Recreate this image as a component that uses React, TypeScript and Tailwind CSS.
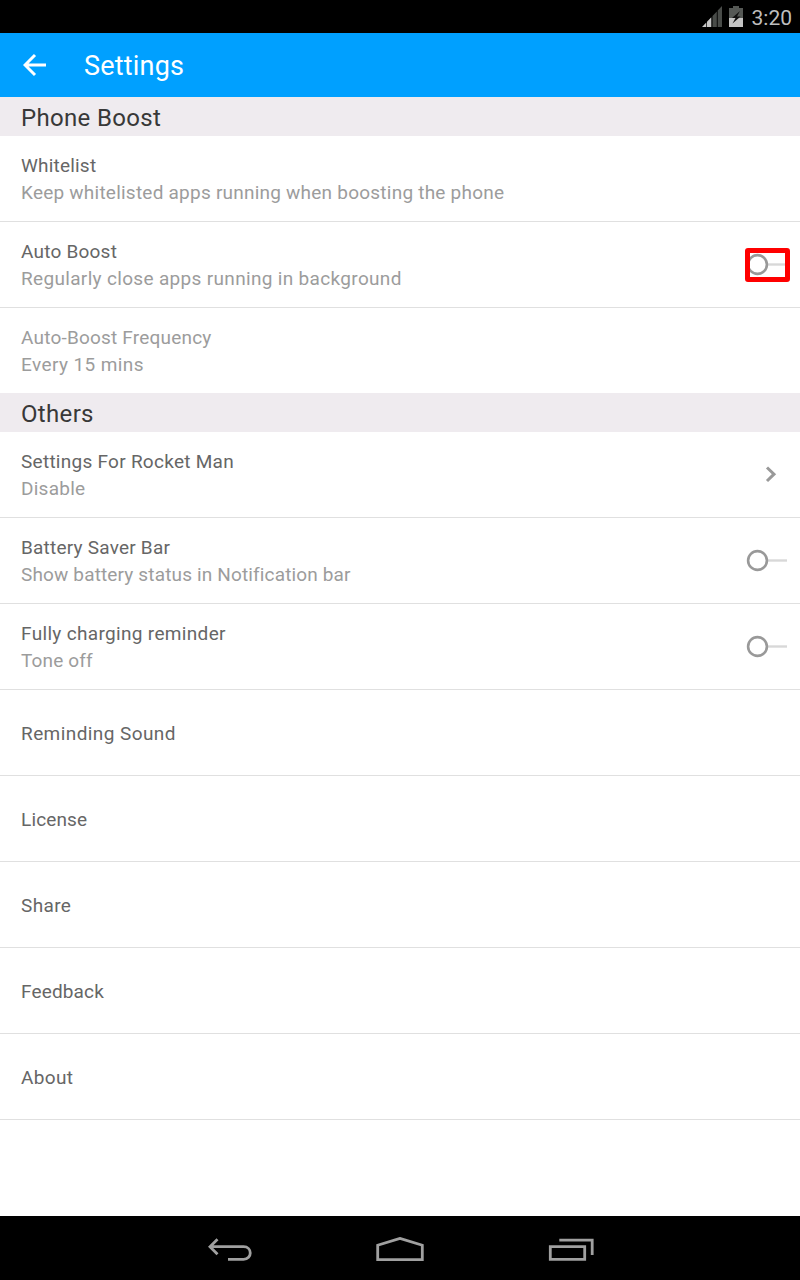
import React from "react";

type Item = {
  title: string;
  sub?: string;
  titleClass?: string;
  subClass?: string;
  kind?: "switch" | "chevron";
  marked?: boolean;
  off?: boolean;
  last?: boolean;
};

const boost: Item[] = [
  { title: "Whitelist", titleClass: "tracking-[0.2px]", sub: "Keep whitelisted apps running when boosting the phone", subClass: "tracking-[0.23px]" },
  { title: "Auto Boost", titleClass: "tracking-[0.22px]", sub: "Regularly close apps running in background", subClass: "tracking-[0.33px]", kind: "switch", marked: true },
  { title: "Auto-Boost Frequency", titleClass: "tracking-[0.2px]", sub: "Every 15 mins", subClass: "tracking-[0.4px]", off: true, last: true },
];
const others: Item[] = [
  { title: "Settings For Rocket Man", titleClass: "tracking-[0.27px]", sub: "Disable", subClass: "tracking-[0.25px]", kind: "chevron" },
  { title: "Battery Saver Bar", titleClass: "tracking-[0.22px]", sub: "Show battery status in Notification bar", subClass: "tracking-[0.15px]", kind: "switch" },
  { title: "Fully charging reminder", titleClass: "tracking-[0.33px]", sub: "Tone off", subClass: "tracking-[0.15px]", kind: "switch" },
  { title: "Reminding Sound", titleClass: "tracking-[0.42px]" },
  { title: "License", titleClass: "tracking-[0.15px]" },
  { title: "Share", titleClass: "tracking-[0.35px]" },
  { title: "Feedback", titleClass: "tracking-[0.15px]" },
  { title: "About", titleClass: "tracking-[0.35px]" },
];

function Switch() {
  return (
    <svg width="42" height="24" viewBox="0 0 42 24" fill="none">
      <path d="M21 11.5H41" stroke="#d8d8d8" strokeWidth="2.4" />
      <circle cx="11.5" cy="11.5" r="9.4" stroke="#999" strokeWidth="2.6" />
    </svg>
  );
}

function Header({ children }: { children: string }) {
  return (
    <h2 className="flex h-[39px] items-center bg-[#efebef] pl-[21px] pt-0.5 text-2xl leading-8 tracking-[0.33px] text-[#383838]">
      {children}
    </h2>
  );
}

function Row({ item }: { item: Item }) {
  return (
    <li className={`flex items-center justify-between pl-[21px] ${item.last ? "h-[85px]" : "h-[86px] border-b border-[#e0e0e0]"}`}>
      <div className={`text-[19px] leading-[27px] ${item.sub ? "" : "pt-0.5"}`}>
        <div className={`${item.off ? "text-[#9c9c9c]" : "text-[#666]"} ${item.titleClass ?? ""}`}>{item.title}</div>
        {item.sub && <div className={`text-[#9c9c9c] ${item.subClass ?? ""}`}>{item.sub}</div>}
      </div>
      {item.kind === "switch" && (
        <div className="relative mr-3 flex">
          <Switch />
          {item.marked && <div className="absolute -left-px -top-[5px] h-[34px] w-[45px] rounded-[3px] border-[5px] border-[#f00]" />}
        </div>
      )}
      {item.kind === "chevron" && (
        <svg className="mr-[22px]" width="14" height="18" viewBox="0 0 14 18" fill="none">
          <path d="M3 1.5L10 8.2L3 15" stroke="#999" strokeWidth="3" />
        </svg>
      )}
    </li>
  );
}

export default function App() {
  return (
    <div className="flex h-[1280px] w-[800px] flex-col bg-white font-[Roboto,sans-serif]">
      <div className="flex h-[33px] items-center justify-end bg-black pr-2 text-[#bebebe]">
        <svg className="mb-px mr-[7px]" width="20" height="21" viewBox="0 0 20 21">
          <path d="M0 21L4.3 16.5V21ZM5 15.8L9.3 11.3V21H5Z" fill="#c8c8c8" />
          <path d="M10.5 10L14.8 5.5V21H10.5ZM15.7 4.5L20 0V21H15.7Z" fill="#494c49" />
        </svg>
        <svg className="mb-px mr-[9px]" width="14" height="21" viewBox="0 0 14 21">
          <path d="M4 0H10V2H14V12H0V2H4Z" fill="#555855" />
          <path d="M0 12H14V21H0Z" fill="#c4c4c4" />
          <path d="M11 5L3 12H6.5L3.5 17.5L11.5 10.5H8Z" fill="#111" />
        </svg>
        <span className="pt-0.5 text-[21px] leading-7">3:20</span>
      </div>
      <header className="flex h-16 items-center bg-[#00a0ff] pl-[23px] text-white">
        <svg width="24" height="24" viewBox="0 0 24 24" fill="none" stroke="white" strokeWidth="3">
          <path d="M23 12H3M12 2L2 12L12 22" />
        </svg>
        <h1 className="ml-[37px] pt-0.5 text-[27px] tracking-[0.2px]">Settings</h1>
      </header>
      <main className="flex-1">
        <Header>Phone Boost</Header>
        <ul>{boost.map((i) => <Row key={i.title} item={i} />)}</ul>
        <Header>Others</Header>
        <ul>{others.map((i) => <Row key={i.title} item={i} />)}</ul>
      </main>
      <nav className="flex h-16 items-center bg-black pl-[207px] pt-2">
        <svg width="46" height="30" viewBox="0 0 46 30" fill="none" stroke="#a0a0a0" strokeWidth="2.8">
          <path d="M10.5 2.2L3 9.7L10.5 17.2M3 9.7H36.5C45.5 9.7 45.5 22.3 36.5 22.3H21" />
        </svg>
        <svg className="ml-[122px]" width="50" height="30" viewBox="0 0 50 30" fill="none" stroke="#a0a0a0" strokeWidth="2.8">
          <path d="M2.7 22.7V8.2L25 1.4L47.3 8.2V22.7Z" />
        </svg>
        <svg className="ml-[123px]" width="48" height="30" viewBox="0 0 48 30" fill="none" stroke="#a0a0a0" strokeWidth="2.8">
          <path d="M2.3 9.7H36.7V22.3H2.3ZM11.3 3.2H44.2V18" />
        </svg>
      </nav>
    </div>
  );
}
